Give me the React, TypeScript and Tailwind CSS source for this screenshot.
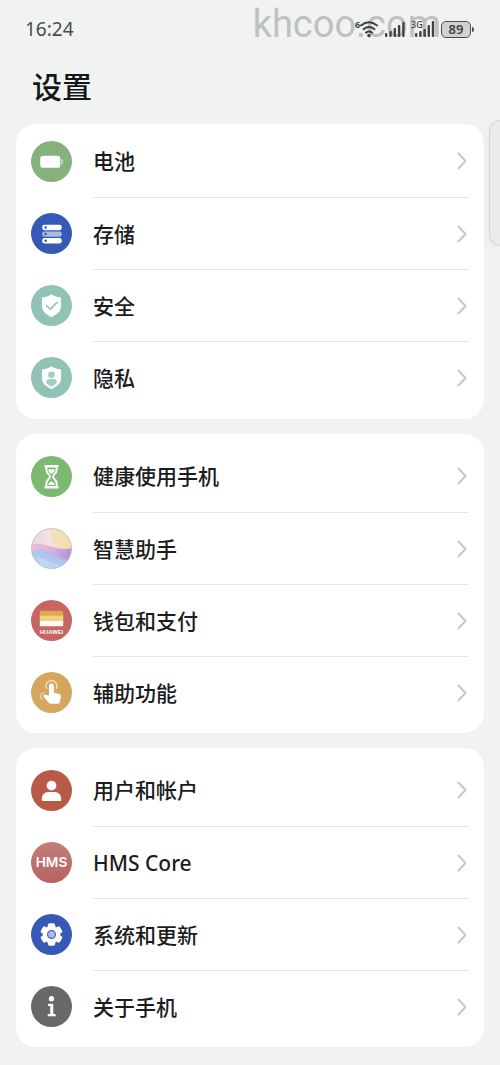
import React from 'react';

type Item = {
  label: string;
  icon: React.ReactNode;
};

const Disc: React.FC<{ fill: string; children: React.ReactNode }> = ({ fill, children }) => (
  <svg viewBox="0 0 42 42" className="size-[41px] shrink-0" aria-hidden="true">
    <circle cx="21" cy="21" r="21" fill={fill} />
    {children}
  </svg>
);

const BatteryIcon = () => (
  <Disc fill="#86b07c">
    <rect x="9.5" y="15" width="20.5" height="12.5" rx="3" fill="#fff" />
    <path d="M31 18.5h.6a1 1 0 0 1 1 1v3.5a1 1 0 0 1-1 1H31z" fill="#cfe0cb" />
  </Disc>
);

const StorageIcon = () => (
  <Disc fill="#3659b8">
    <rect x="11.5" y="12" width="20" height="5.6" rx="2.2" fill="#fff" />
    <rect x="11.5" y="18.9" width="20" height="5.4" rx="2.2" fill="#a9bbe6" />
    <rect x="11.5" y="25.6" width="20" height="5.6" rx="2.2" fill="#fff" />
    <circle cx="15" cy="14.8" r="1.3" fill="#3659b8" />
    <circle cx="15" cy="21.6" r="1.3" fill="#3659b8" />
    <circle cx="15" cy="28.4" r="1.3" fill="#3659b8" />
  </Disc>
);

const shield = 'M21 9.5c2.6 1.8 5.5 2.8 8.6 3.1.8.1 1.2.6 1.2 1.4v7c0 5.6-3.3 8.9-9.8 12-6.5-3.1-9.8-6.4-9.8-12v-7c0-.8.4-1.3 1.2-1.4 3.1-.3 6-1.3 8.6-3.1z';

const SecurityIcon = () => (
  <Disc fill="#90c2b6">
    <path d={shield} fill="#fff" />
    <path d="M16 21.2l3.8 3.6 6.8-7" fill="none" stroke="#90c2b6" strokeWidth="1.6" strokeLinecap="round" strokeLinejoin="round" />
  </Disc>
);

const PrivacyIcon = () => (
  <Disc fill="#90c2b6">
    <path d={shield} fill="#fff" />
    <circle cx="21" cy="18.2" r="3.4" fill="#a3ccc2" />
    <path d="M15.4 26c0-2.4 1.6-3.5 3.4-3.5h4.4c1.8 0 3.4 1.1 3.4 3.5-1.3 1.6-3.2 3-5.6 4.1-2.4-1.1-4.3-2.5-5.6-4.1z" fill="#a3ccc2" />
  </Disc>
);

const HourglassIcon = () => (
  <Disc fill="#7bb870">
    <path d="M14.8 10.5h12.4M14.8 32h12.4" stroke="#fff" strokeWidth="2.4" strokeLinecap="round" />
    <path d="M15.8 11v3.5c0 3.4 3.6 4.5 3.6 6.7s-3.6 3.4-3.6 6.6V31.5M26.2 11v3.5c0 3.4-3.6 4.5-3.6 6.7s3.6 3.4 3.6 6.6V31.5" fill="none" stroke="#fff" strokeWidth="2" />
    <path d="M21 18.4c-1.8-1.3-3.2-2.2-3.2-3.5 0-1.7 2.2-2.1 3.2-.6 1-1.5 3.2-1.1 3.2.6 0 1.3-1.4 2.2-3.2 3.5z" fill="#fff" />
    <path d="M17.8 29.6c0-1.6 1.6-2.7 3.2-3.7 1.6 1 3.2 2.1 3.2 3.7z" fill="#fff" />
  </Disc>
);

const AssistantIcon = () => (
  <svg viewBox="0 0 42 42" className="size-[41px] shrink-0" aria-hidden="true">
    <defs>
      <clipPath id="orb">
        <circle cx="21" cy="21" r="20.5" />
      </clipPath>
      <filter id="orbSoft">
        <feGaussianBlur stdDeviation="0.8" />
      </filter>
      <linearGradient id="orbTop" x1="0" x2="1" y1="0" y2="0.3">
        <stop offset="0" stopColor="#e5d5ea" />
        <stop offset="0.5" stopColor="#f2e4e0" />
        <stop offset="1" stopColor="#f4dba5" />
      </linearGradient>
      <linearGradient id="orbMid" x1="0" x2="1" y1="0" y2="0.4">
        <stop offset="0" stopColor="#efc0d0" />
        <stop offset="0.5" stopColor="#dbb3dc" />
        <stop offset="1" stopColor="#aa88dc" />
      </linearGradient>
      <linearGradient id="orbLow" x1="0" x2="1" y1="1" y2="0">
        <stop offset="0" stopColor="#b4dcf4" />
        <stop offset="0.6" stopColor="#b0c3ec" />
        <stop offset="1" stopColor="#a890e0" />
      </linearGradient>
    </defs>
    <g clipPath="url(#orb)">
      <rect width="42" height="42" fill="url(#orbTop)" />
      <g filter="url(#orbSoft)">
        <path d="M19 -2c1 10 2 16 9 19 6 2.5 12 1 18-2V-2z" fill="#f6dfae" opacity="0.8" />
        <path d="M-2 18c7-3 13-2 19 0 9 3 19 5 28 2v26H-2z" fill="url(#orbMid)" />
        <path d="M-2 25c9-4 15-4 21 0 8 4 16 9 26 7v15H-2z" fill="url(#orbLow)" />
        <path d="M-2 34c9-5 15-3 20 0s11 5 20 3L26 45H-2z" fill="#bfdcf5" opacity="0.7" />
      </g>
    </g>
    <circle cx="21" cy="21" r="20.5" fill="none" stroke="#c9b3c4" strokeWidth="0.8" />
  </svg>
);

const WalletIcon = () => (
  <Disc fill="#c66562">
    <path d="M9 13a2 2 0 0 1 2-2h20a2 2 0 0 1 2 2v4H9z" fill="#dfa94b" />
    <rect x="9" y="16" width="24" height="6" fill="#eed27c" />
    <path d="M9 21.5h24V26a1 1 0 0 1-1 1H10a1 1 0 0 1-1-1z" fill="#fffdf5" />
    <text x="21" y="35" textAnchor="middle" fill="#fff" className="font-['Liberation_Sans'] text-[6px] font-bold">
      HUAWEI
    </text>
  </Disc>
);

const TouchIcon = () => (
  <Disc fill="#d6a65f">
    <path d="M18.4 14.2a2.5 2.5 0 0 1 5 0v7.1l5.4 1.1c1.3.3 2 1.3 1.8 2.6l-.9 5.2a2.8 2.8 0 0 1-2.7 2.3h-6.600c-1 0-1.700-.4-2.300-1.100l-5-5.900c-.9-1.200.1-2.600 1.600-2.300l3.700.8z" fill="#fff" />
    <path d="M15.8 16.8a5.7 5.7 0 1 1 10.3 0" fill="none" stroke="#f0dcbc" strokeWidth="1.4" strokeLinecap="round" />
    <path d="M13.2 21c-3.7.8-4.3 5-1.5 7.6" fill="none" stroke="#f0dcbc" strokeWidth="1.2" strokeLinecap="round" />
  </Disc>
);

const UserIcon = () => (
  <Disc fill="#b75b47">
    <circle cx="21" cy="16" r="5" fill="#fff" />
    <path d="M11 30.5c0-5 2.8-8 6.8-8h6.4c4 0 6.8 3 6.8 8 0 .8-.5 1.2-1.2 1.2H12.2c-.7 0-1.2-.4-1.2-1.2z" fill="#fff" />
  </Disc>
);

const HmsIcon = () => (
  <svg viewBox="0 0 42 42" className="size-[41px] shrink-0" aria-hidden="true">
    <defs>
      <linearGradient id="hms" x1="0" x2="0" y1="0" y2="1">
        <stop offset="0" stopColor="#c27f78" />
        <stop offset="1" stopColor="#b86161" />
      </linearGradient>
    </defs>
    <circle cx="21" cy="21" r="21" fill="url(#hms)" />
    <text x="21" y="26" textAnchor="middle" fill="#fff" className="font-['Inter'] text-[14px] font-semibold">
      HMS
    </text>
  </svg>
);

const GearIcon = () => (
  <Disc fill="#3659b8">
    {[0, 60, 120].map((angle) => (
      <rect key={angle} x="17.2" y="9.6" width="7.6" height="22.8" rx="2" fill="#fff" transform={`rotate(${angle} 21 21)`} />
    ))}
    <circle cx="21" cy="21" r="9" fill="#fff" />
    <circle cx="21" cy="21" r="4" fill="#a9bdee" stroke="#4a69bf" strokeWidth="1.3" />
  </Disc>
);

const InfoIcon = () => (
  <Disc fill="#686868">
    <circle cx="21" cy="13" r="2.7" fill="#fff" />
    <path d="M18.5 18.2H22a.8.8 0 0 1 .8.8v9.7h1.4a1.2 1.2 0 0 1 0 2.4h-6a1.2 1.2 0 0 1 0-2.4h1.5v-8.1h-1.2a1.2 1.2 0 0 1 0-2.4z" fill="#fff" />
  </Disc>
);

const batteryGroup: Item[] = [
  { label: '电池', icon: <BatteryIcon /> },
  { label: '存储', icon: <StorageIcon /> },
  { label: '安全', icon: <SecurityIcon /> },
  { label: '隐私', icon: <PrivacyIcon /> },
];

const featureGroup: Item[] = [
  { label: '健康使用手机', icon: <HourglassIcon /> },
  { label: '智慧助手', icon: <AssistantIcon /> },
  { label: '钱包和支付', icon: <WalletIcon /> },
  { label: '辅助功能', icon: <TouchIcon /> },
];

const systemGroup: Item[] = [
  { label: '用户和帐户', icon: <UserIcon /> },
  { label: 'HMS Core', icon: <HmsIcon /> },
  { label: '系统和更新', icon: <GearIcon /> },
  { label: '关于手机', icon: <InfoIcon /> },
];

const Rows: React.FC<{ items: Item[] }> = ({ items }) => (
  <ul>
    {items.map((item, i) => (
      <li key={item.label}>
        <a href="#" className="flex h-[72px] items-center gap-[21px] px-[15px]">
          {item.icon}
          <span
            className={
              i > 0
                ? 'flex h-full flex-1 items-center justify-between border-t border-[#e6e6e6]'
                : 'flex h-full flex-1 items-center justify-between'
            }
          >
            <span className="text-[21px] leading-7 font-medium text-[#1c1c1c]">{item.label}</span>
            <svg viewBox="0 0 10 18" className="mr-[2px] h-[18px] w-[10px]" aria-hidden="true">
              <path d="M1.5 1.5L8.5 9l-7 7.5" fill="none" stroke="#c8c8c8" strokeWidth="2" strokeLinecap="round" strokeLinejoin="round" />
            </svg>
          </span>
        </a>
      </li>
    ))}
  </ul>
);

const StatusBar = () => (
  <header className="relative flex h-[58px] items-center justify-between pr-[26px] pl-[25px]">
    <time className="font-['Noto_Sans'] text-[19px] leading-6 text-[#4a4d4d]">16:24</time>
    <span className="absolute top-0 right-[59px] font-['Roboto'] text-[38px] leading-[48px] text-[#bfc1c1]">khcoo.com</span>
    <div className="relative flex items-center gap-[6px] text-[#3f4242]">
      <svg viewBox="0 0 24 18" className="h-[18px] w-6 overflow-visible" aria-label="Wi-Fi 6">
        <text x="0" y="8" fill="currentColor" className="font-['Noto_Sans'] text-[9px] font-bold">6</text>
        <g fill="none" stroke="currentColor" strokeWidth="2" strokeLinecap="round">
          <path d="M6 5.5c5-4 11-4 16 0" />
          <path d="M8.5 9.2c3.5-2.8 7.5-2.8 11 0" />
          <path d="M11 12.6c2-1.5 4-1.5 6 0" />
        </g>
        <circle cx="14" cy="15.6" r="1.8" fill="currentColor" />
      </svg>
      <svg viewBox="0 0 20 18" className="h-[18px] w-5" fill="currentColor" aria-label="Signal">
        <rect x="0" y="13" width="2.4" height="4" rx="1" />
        <rect x="4.3" y="11" width="2.4" height="6" rx="1" />
        <rect x="8.6" y="8" width="2.4" height="9" rx="1" />
        <rect x="12.9" y="5" width="2.4" height="12" rx="1" />
        <rect x="17.2" y="2" width="2.4" height="15" rx="1" />
      </svg>
      <svg viewBox="0 0 24 18" className="h-[18px] w-6 overflow-visible" fill="currentColor" aria-label="3G signal">
        <text x="0" y="8" className="font-['Noto_Sans'] text-[9px] font-medium">3G</text>
        <rect x="4" y="13" width="2.4" height="4" rx="1" />
        <rect x="8.2" y="11" width="2.4" height="6" rx="1" />
        <rect x="12.4" y="9" width="2.4" height="8" rx="1" />
        <rect x="16.6" y="5" width="2.4" height="12" rx="1" />
        <rect x="20.8" y="1" width="2.4" height="16" rx="1" />
      </svg>
      <div className="flex items-center gap-px">
        <span className="flex h-[17px] w-[30px] items-center justify-center rounded-[5px] border border-[#4a4d4d] bg-[#d0d2d2] font-['Noto_Sans'] text-[13px] leading-none font-semibold">
          89
        </span>
        <span className="h-[5px] w-[2px] rounded-r-sm bg-[#4f5252]" />
      </div>
    </div>
  </header>
);

const App: React.FC = () => {
  return (
    <div className="relative min-h-screen overflow-hidden bg-[#f1f3f3] pb-[17px] font-['Noto_Sans','Noto_Sans_CJK_SC',sans-serif]">
      <StatusBar />
      <h1 className="flex h-[66px] items-center px-8 pb-2 text-[30px] leading-10 font-medium text-[#161616]">设置</h1>

      <main className="flex flex-col gap-[15px] px-4">
        <section className="rounded-[20px] bg-white pt-px pb-[6px]">
          <Rows items={batteryGroup} />
        </section>
        <section className="rounded-[20px] bg-white pt-[6px] pb-[5px]">
          <Rows items={featureGroup} />
        </section>
        <section className="rounded-[20px] bg-white pt-[6px] pb-[5px]">
          <Rows items={systemGroup} />
        </section>
      </main>

      {/* Edge panel handle */}
      <div className="absolute top-[120px] right-0 h-[126px] w-[11px] rounded-l-[16px] border border-r-0 border-[#d6d8d9] bg-[#e9ebec] shadow-[0_0_12px_rgba(0,0,0,0.05)]" />
    </div>
  );
};

export default App;
